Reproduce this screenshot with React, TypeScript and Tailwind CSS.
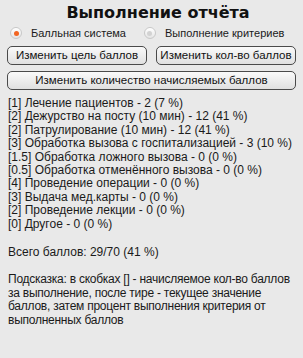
const ITEMS = [
  "[1] Лечение пациентов - 2 (7 %)",
  "[2] Дежурство на посту (10 мин) - 12 (41 %)",
  "[2] Патрулирование (10 мин) - 12 (41 %)",
  "[3] Обработка вызова с госпитализацией - 3 (10 %)",
  "[1.5] Обработка ложного вызова - 0 (0 %)",
  "[0.5] Обработка отменённого вызова - 0 (0 %)",
  "[4] Проведение операции - 0 (0 %)",
  "[3] Выдача мед.карты - 0 (0 %)",
  "[2] Проведение лекции - 0 (0 %)",
  "[0] Другое - 0 (0 %)",
];

const HINT = [
  "Подсказка: в скобках [] - начисляемое кол-во баллов",
  "за выполнение, после тире - текущее значение",
  "баллов, затем процент выполнения критерия от",
  "выполненных баллов",
];

function Radio({ checked, label }: { checked: boolean; label: string }) {
  return (
    <label className="flex items-center gap-[9px] whitespace-nowrap">
      <span className="flex h-[12px] w-[12px] items-center justify-center rounded-full border border-[#c8c8c8] bg-gradient-to-b from-[#ffffff] to-[#e4e4e4]">
        <span
          className={`h-[5px] w-[5px] rounded-full ${
            checked ? "bg-[#f26522]" : "bg-[#d2d2d2]"
          }`}
        />
      </span>
      <span>{label}</span>
    </label>
  );
}

function Btn({ children, className = "" }: { children: string; className?: string }) {
  return (
    <button
      type="button"
      className={`h-[19px] whitespace-nowrap rounded-[5px] border border-[#4a4a4a] bg-gradient-to-b from-[#fafafa] to-[#e0e0e0] text-[11.5px] leading-none text-[#111] ${className}`}
    >
      {children}
    </button>
  );
}

export default function App() {
  return (
    <div className="h-[358px] w-[303px] overflow-hidden bg-[#e9e9e9] text-[#1a1a1a]">
      <h1 className="pl-[13px] pt-[3px] text-center font-['DejaVu_Sans',sans-serif] text-[16px] font-bold leading-[20px] text-[#111]">
        Выполнение отчёта
      </h1>
      <div className="flex h-[20px] items-center gap-[18px] pl-[10px] font-['Liberation_Sans',sans-serif] text-[11px]">
        <Radio checked label="Балльная система" />
        <Radio checked={false} label="Выполнение критериев" />
      </div>
      <div className="flex flex-col gap-[6px] px-[7px] pt-[3px] font-['Liberation_Sans',sans-serif]">
        <div className="flex justify-between">
          <Btn className="w-[140px]">Изменить цель баллов</Btn>
          <Btn className="w-[140px]">Изменить кол-во баллов</Btn>
        </div>
        <Btn className="w-full">Изменить количество начисляемых баллов</Btn>
      </div>
      <div className="px-[8px] pt-[7px] font-['Liberation_Sans',sans-serif] text-[12px] leading-[13.4px]">
        {ITEMS.map((t) => (
          <div key={t}>{t}</div>
        ))}
        <div className="pt-[14.5px]">Всего баллов: 29/70 (41 %)</div>
        <div className="pt-[14.5px] tracking-[-0.25px]">
          {HINT.map((t) => (
            <div key={t} className="whitespace-nowrap">
              {t}
            </div>
          ))}
        </div>
      </div>
    </div>
  );
}
